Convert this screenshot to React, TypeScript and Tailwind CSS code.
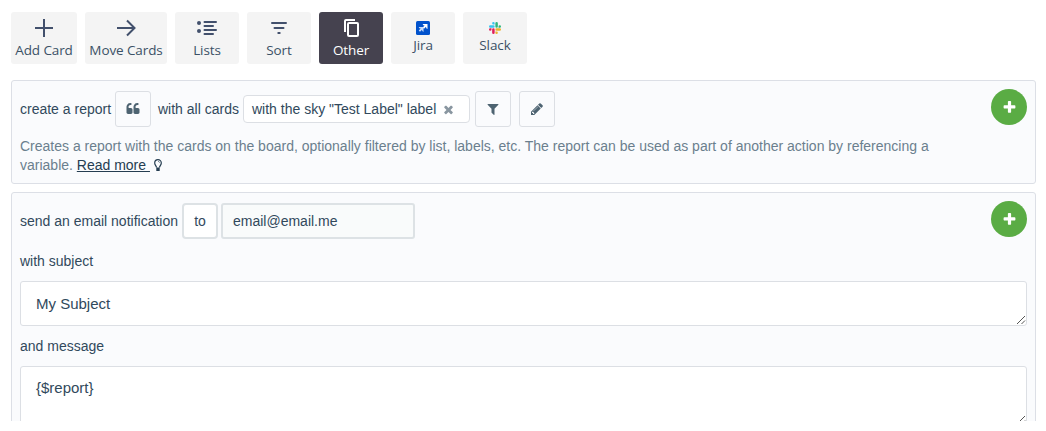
import type { ReactNode } from "react";

const glyphs = {
  quote:
    "M832 960v384q0 80-56 136t-136 56h-384q-80 0-136-56t-56-136v-704q0-104 40.5-198.5t109.5-163.5 163.5-109.5 198.5-40.5h64q26 0 45 19t19 45v128q0 26-19 45t-45 19h-64q-106 0-181 75t-75 181v32q0 40 28 68t68 28h224q80 0 136 56t56 136zm896 0v384q0 80-56 136t-136 56h-384q-80 0-136-56t-56-136v-704q0-104 40.5-198.5t109.5-163.5 163.5-109.5 198.5-40.5h64q26 0 45 19t19 45v128q0 26-19 45t-45 19h-64q-106 0-181 75t-75 181v32q0 40 28 68t68 28h224q80 0 136 56t56 136z",
  times:
    "M1490 1322q0 40-28 68l-136 136q-28 28-68 28t-68-28l-294-294-294 294q-28 28-68 28t-68-28l-136-136q-28-28-28-68t28-68l294-294-294-294q-28-28-28-68t28-68l136-136q28-28 68-28t68 28l294 294 294-294q28-28 68-28t68 28l136 136q28 28 28 68t-28 68l-294 294 294 294q28 28 28 68z",
  filter:
    "M1595 295q17 41-14 70l-493 493v742q0 42-39 59-13 5-25 5-27 0-45-19l-256-256q-19-19-19-45v-486l-493-493q-31-29-14-70 17-39 59-39h1280q42 0 59 39z",
  pencil:
    "M491 1536l91-91-235-235-91 91v107h128v128h107zm523-928q0-22-22-22-10 0-17 7l-542 542q-7 7-7 17 0 22 22 22 10 0 17-7l542-542q7-7 7-17zm-54-192l416 416-832 832h-416v-416zm683 96q0 53-37 90l-166 166-416-416 166-165q36-38 90-38 53 0 91 38l235 234q37 39 37 91z",
  plus:
    "M1600 736v192q0 40-28 68t-68 28h-416v416q0 40-28 68t-68 28h-192q-40 0-68-28t-28-68v-416h-416q-40 0-68-28t-28-68v-192q0-40 28-68t68-28h416v-416q0-40 28-68t68-28h192q40 0 68 28t28 68v416h416q40 0 68 28t28 68z",
};

function Glyph({ name, className }: { name: keyof typeof glyphs; className: string }) {
  return (
    <svg viewBox="0 0 1792 1792" fill="currentColor" className={className}>
      <path d={glyphs[name]} />
    </svg>
  );
}

function Tab({ label, width, active, compact, children }: {
  label: string;
  width: string;
  active?: boolean;
  compact?: boolean;
  children: ReactNode;
}) {
  return (
    <button
      className={`flex h-[52px] shrink-0 flex-col items-center rounded-[3px] ${width} ${
        active ? "bg-[#45424f] text-white" : "bg-[#f4f4f4] text-[#42506c]"
      }`}
    >
      <span className={`flex w-full items-center justify-center ${compact ? "mt-2 h-4" : "mt-1 mb-px h-6"}`}>{children}</span>
      <span className={`font-['Open_Sans','Noto_Sans',sans-serif] text-[13.5px] leading-[18px] tracking-[-0.1px] whitespace-nowrap ${active ? "" : "text-[#3b5166]"}`}>
        {label}
      </span>
    </button>
  );
}

function AddButton() {
  return (
    <button className="flex size-9 shrink-0 items-center justify-center rounded-full bg-[#5aac44] text-white">
      <Glyph name="plus" className="size-[15px]" />
    </button>
  );
}

function IconButton({ name }: { name: keyof typeof glyphs }) {
  return (
    <button className="flex size-9 items-center justify-center rounded-[3px] border border-[#dcdfe4] bg-[#fafbfd] text-[#4d6371]">
      <Glyph name={name} className="size-[14px]" />
    </button>
  );
}

function ResizeGrip() {
  return (
    <svg viewBox="0 0 10 10" className="absolute right-0 bottom-0 size-[10px]" fill="none" stroke="#555" strokeWidth="1">
      <path d="M1 9L9 1M5.500 9L9 5.500" />
    </svg>
  );
}

export default function App() {
  return (
    <div className="h-[431px] bg-white font-['Liberation_Sans',Arial,sans-serif] text-[14px] text-[#31495c]">
      <div className="flex h-[421px] flex-col overflow-hidden pt-3 pr-[10px] pl-[11px]">
        <nav className="flex shrink-0 gap-2">
          <Tab label="Add Card" width="w-[66px]">
            <svg viewBox="0 0 24 24" className="size-6" stroke="currentColor" strokeWidth="2"><path d="M12 3v18M3 12h18" /></svg>
          </Tab>
          <Tab label="Move Cards" width="w-[82px]">
            <svg viewBox="0 0 24 24" className="size-6" stroke="currentColor" strokeWidth="2" fill="none"><path d="M3 12h17M13 4.500l7.500 7.500-7.500 7.500" /></svg>
          </Tab>
          <Tab label="Lists" width="w-16">
            <svg viewBox="0 0 24 24" className="size-6" stroke="currentColor" strokeWidth="2" strokeLinecap="round">
              <path d="M9.500 6h11.500M9.500 10h8.500M9.500 14h11.500M9.500 18h8.500" />
              <circle cx="4" cy="7" r="2" fill="currentColor" stroke="none" />
              <circle cx="4" cy="15" r="2" fill="currentColor" stroke="none" />
            </svg>
          </Tab>
          <Tab label="Sort" width="w-16">
            <svg viewBox="0 0 24 24" className="size-6" stroke="currentColor" strokeWidth="2" strokeLinecap="round"><path d="M5 7h14M7.500 12h9M11.300 17h1.400" /></svg>
          </Tab>
          <Tab label="Other" width="w-16" active>
            <svg viewBox="0 0 24 24" className="size-6" fill="none" stroke="currentColor" strokeWidth="2" strokeLinejoin="round"><path d="M6 16V5q0-1 1-1h9" /><rect x="9" y="7" width="10" height="13" rx="1" /></svg>
          </Tab>
          <Tab label="Jira" width="w-16" compact>
            <svg viewBox="0 0 14 14" className="size-[14px]">
              <rect width="14" height="14" rx="1.500" fill="#0052cc" />
              <path d="M6.600 3H11.500v5Q9.900 7.500 10 5.800L8 7.700 6.700 6.400 8.600 4.600Q7 4.600 6.600 3Z" fill="#fff" />
              <path d="M2.700 6H7.500v5Q5.900 10.300 6 8.700L4 10.700 2.700 9.400 4.700 7.500Q3 7.500 2.700 6Z" fill="#c9dcf7" />
            </svg>
          </Tab>
          <Tab label="Slack" width="w-16" compact>
            <svg viewBox="0 0 24 24" className="size-3">
              <path fill="#e01e5a" d="M5 15.200a2.500 2.500 0 1 1-2.500-2.500H5zm1.300 0a2.500 2.500 0 0 1 5 0v6.300a2.500 2.500 0 0 1-5 0z" />
              <path fill="#36c5f0" d="M8.800 5a2.500 2.500 0 1 1 2.500-2.500V5zm0 1.300a2.500 2.500 0 0 1 0 5H2.500a2.500 2.500 0 0 1 0-5z" />
              <path fill="#2eb67d" d="M19 8.800a2.500 2.500 0 1 1 2.500 2.500H19zm-1.300 0a2.500 2.500 0 0 1-5 0V2.500a2.500 2.500 0 0 1 5 0z" />
              <path fill="#ecb22e" d="M15.200 19a2.500 2.500 0 1 1-2.500 2.500V19zm0-1.300a2.500 2.500 0 0 1 0-5h6.300a2.500 2.500 0 0 1 0 5z" />
            </svg>
          </Tab>
        </nav>

        <section className="mt-4 h-[104px] shrink-0 rounded-[3px] border border-[#dcdfe6] bg-[#fafbfd] px-2 pt-2">
          <div className="flex items-start">
            <div className="mt-[2px] flex h-9 grow items-center whitespace-nowrap">
              <span className="w-[95px]">create a report</span>
              <IconButton name="quote" />
              <span className="ml-[7px] w-[85px]">with all cards</span>
              <span className="flex h-7 w-[227px] items-center rounded-[4px] border border-[#dcdfe4] bg-white pl-2">
                with the sky "Test Label" label
                <Glyph name="times" className="ml-[6px] size-[13px] text-[#8996a0]" />
              </span>
              <span className="ml-[5px] flex gap-2">
                <IconButton name="filter" />
                <IconButton name="pencil" />
              </span>
            </div>
            <AddButton />
          </div>
          <p className="mt-[10px] leading-[19px] text-[#6b7f8e]">
            Creates a report with the cards on the board, optionally filtered by list, labels, etc. The report can be used as part of another action by referencing a
            <br />
            variable.{" "}
            <a className="text-[#253d51] underline whitespace-pre">Read more </a>
            <svg viewBox="0 0 8 13" className="ml-[4px] inline-block h-[13px] w-2 align-[-2px]" fill="none" stroke="#253d51">
              <path d="M2.500 8.500C2.500 7 .7 6 .7 3.900a3.300 3.300 0 0 1 6.600 0C7.300 6 5.500 7 5.500 8.500" strokeWidth="1.200" />
              <path d="M2.300 9.500h3.400M2.300 11h3.400" strokeWidth="1.800" />
              <path d="M4 2.400q1.400 0 1.600 1.300" strokeWidth=".6" />
            </svg>
          </p>
        </section>

        <section className="mt-2 h-[300px] shrink-0 rounded-[3px] border border-[#dcdfe6] bg-[#fafbfd] px-2 pt-2">
          <div className="flex items-start">
            <div className="mt-[2px] flex h-9 grow items-center whitespace-nowrap">
              <span className="w-[162px]">send an email notification</span>
              <button className="flex h-9 w-9 items-center justify-center rounded-[4px] border-2 border-[#dde2e5] bg-white">to</button>
              <span className="ml-[3px] flex h-9 w-[194px] items-center rounded-[3px] border-2 border-[#dde2e5] bg-[#f9fbfb] pl-[10px]">email@email.me</span>
            </div>
            <AddButton />
          </div>
          <div className="mt-[12px] leading-5">with subject</div>
          <div className="relative mt-[10px] flex h-[45px] items-center rounded-[3px] border border-[#dcdfe4] bg-white pt-px pl-[15px] text-[15px]">
            My Subject
            <ResizeGrip />
          </div>
          <div className="mt-[10px] leading-5">and message</div>
          <div className="relative mt-[10px] h-[60px] rounded-[3px] border border-[#dcdfe4] bg-white pt-[11px] pl-[15px] text-[15px] leading-5">
            {"{$report}"}
            <ResizeGrip />
          </div>
        </section>
      </div>
    </div>
  );
}
